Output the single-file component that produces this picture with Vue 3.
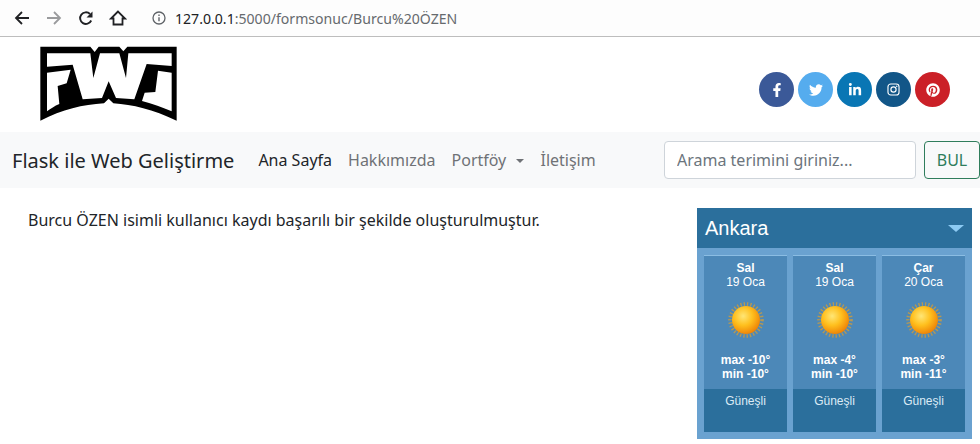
<template>
  <div class="page">
    <div class="browser-bar">
      <svg class="b-icon" width="16" height="16" viewBox="0 0 16 16"><path d="M15 8H2M8 2 2 8l6 6" fill="none" stroke="#202124" stroke-width="1.8"/></svg>
      <svg class="b-icon" width="16" height="16" viewBox="0 0 16 16"><path d="M1 8h13M8 2l6 6-6 6" fill="none" stroke="#9a9b9d" stroke-width="1.8"/></svg>
      <svg class="b-icon" width="16" height="16" viewBox="0 0 16 16"><path d="M13.2 10.5A5.8 5.8 0 1 1 12 4" fill="none" stroke="#202124" stroke-width="1.9"/><path d="M14.5 1.5v6h-6z" fill="#202124"/></svg>
      <svg class="b-icon home" width="18" height="18" viewBox="0 0 18 18"><path d="M9 2.5 2 9.5h2.5v6h9v-6H16z" fill="none" stroke="#202124" stroke-width="1.8" stroke-linejoin="miter"/></svg>
      <svg class="info" width="14" height="14" viewBox="0 0 14 14"><circle cx="7" cy="7" r="6" fill="none" stroke="#5f6368" stroke-width="1.3"/><path d="M7 6.2v4M7 3.6v1.4" stroke="#5f6368" stroke-width="1.4"/></svg>
      <div class="url"><span class="host">127.0.0.1</span>:5000/formsonuc/Burcu%20ÖZEN</div>
    </div>

    <header class="site-header">
      <svg class="logo" width="146" height="84" viewBox="0 0 438 252">
        <path d="M13 14H163L176 30 188 14H250L262 28 274 14H422V236C350 202 290 188 232 184L218 170 204 184C140 188 80 202 13 236Z" fill="#000"/>
        <g fill="#fff">
          <path d="M33 34H163L172 108 192 34H250L270 108 277 34H407V72L332 66 295 172 240 168 218 118 198 168 140 172 110 68 33 74Z"/>
          <path d="M33 92 104 83 92 124 65 132 70 186C55 192 45 200 33 208Z"/>
          <path d="M407 92 366 86 358 150 326 152 318 177C350 186 380 196 407 208Z"/>
        </g>
      </svg>
      <div class="socials">
        <a v-for="s in socials" :key="s.name" class="social" :class="s.name">
          <svg width="14" height="14" :viewBox="s.box"><path :d="s.d" fill="#fff"/></svg>
        </a>
        <a class="social instagram">
          <svg width="13" height="13" viewBox="0 0 16 16"><rect x="1.2" y="1.2" width="13.6" height="13.6" rx="3.5" fill="none" stroke="#fff" stroke-width="1.4"/><circle cx="8" cy="8" r="3.2" fill="none" stroke="#fff" stroke-width="1.4"/><circle cx="12" cy="4" r=".9" fill="#fff"/></svg>
        </a>
        <a class="social pinterest">
          <svg width="14" height="14" viewBox="0 0 496 512"><path :d="pinterest" fill="#fff"/></svg>
        </a>
      </div>
    </header>

    <nav class="navbar">
      <a class="brand">Flask ile Web Geliştirme</a>
      <a class="nav-link active">Ana Sayfa</a>
      <a class="nav-link">Hakkımızda</a>
      <a class="nav-link">Portföy <span class="caret"></span></a>
      <a class="nav-link">İletişim</a>
      <form class="search" @submit.prevent>
        <input type="text" placeholder="Arama terimini giriniz..." />
        <button>BUL</button>
      </form>
    </nav>

    <main class="content">
      <p class="message">Burcu ÖZEN isimli kullanıcı kaydı başarılı bir şekilde oluşturulmuştur.</p>
      <aside class="weather">
        <div class="city"><span>Ankara</span><i class="arrow"></i></div>
        <div class="days">
          <div v-for="(d, i) in days" :key="i" class="day">
            <div class="day-top">
              <b>{{ d.name }}</b>
              <span>{{ d.date }}</span>
              <svg class="sun" width="40" height="40" viewBox="0 0 40 40">
                <defs>
                  <radialGradient :id="'sun' + i" cx="40%" cy="36%" r="66%">
                    <stop offset="0" stop-color="#ffe676"/>
                    <stop offset=".5" stop-color="#ffc01e"/>
                    <stop offset="1" stop-color="#ee8305"/>
                  </radialGradient>
                </defs>
                <circle cx="20" cy="20" r="16" fill="none" stroke="#cf9c3a" stroke-width="3.6" stroke-dasharray="1.3 2" opacity=".8"/>
                <circle cx="20" cy="20" r="14" :fill="'url(#sun' + i + ')'"/>
              </svg>
              <b class="temp">max {{ d.max }}°</b>
              <b class="temp">min {{ d.min }}°</b>
            </div>
            <div class="day-bottom">Güneşli</div>
          </div>
        </div>
      </aside>
    </main>
  </div>
</template>

<script setup>
const socials = [
  { name: 'facebook', box: '0 0 320 512', d: 'M279.14 288l14.22-92.66h-88.91v-60.13c0-25.35 12.42-50.06 52.24-50.06h40.42V6.26S260.43 0 225.36 0c-73.22 0-121.08 44.38-121.08 124.72v70.62H22.89V288h81.39v224h100.17V288z' },
  { name: 'twitter', box: '0 0 512 512', d: 'M459.37 151.716c.325 4.548.325 9.097.325 13.645 0 138.72-105.583 298.558-298.558 298.558-59.452 0-114.68-17.219-161.137-47.106 8.447.974 16.568 1.299 25.34 1.299 49.055 0 94.213-16.568 130.274-44.832-46.132-.975-84.792-31.188-98.112-72.772 6.498.974 12.995 1.624 19.818 1.624 9.421 0 18.843-1.3 27.614-3.573-48.081-9.747-84.143-51.98-84.143-102.985v-1.299c13.969 7.797 30.214 12.67 47.431 13.319-28.264-18.843-46.781-51.005-46.781-87.391 0-19.492 5.197-37.36 14.294-52.954 51.655 63.675 129.3 105.258 216.365 109.807-1.624-7.797-2.599-15.918-2.599-24.04 0-57.828 46.782-104.934 104.934-104.934 30.213 0 57.502 12.67 76.67 33.137 23.715-4.548 46.456-13.32 66.599-25.34-7.798 24.366-24.366 44.833-46.132 57.827 21.117-2.273 41.584-8.122 60.426-16.243-14.292 20.791-32.161 39.308-52.628 54.253z' },
  { name: 'linkedin', box: '0 0 448 512', d: 'M100.28 448H7.4V148.9h92.88zM53.79 108.1C24.09 108.1 0 83.5 0 53.8a53.79 53.79 0 0 1 107.58 0c0 29.7-24.1 54.3-53.79 54.3zM447.9 448h-92.68V302.4c0-34.7-.7-79.2-48.29-79.2-48.29 0-55.69 37.7-55.69 76.7V448h-92.78V148.9h89.08v40.8h1.3c12.4-23.5 42.69-48.3 87.88-48.3 94 0 111.28 61.9 111.28 142.3V448z' }
];

const pinterest = 'M496 256c0 137-111 248-248 248-25.6 0-50.2-3.9-73.4-11.1 10.1-16.5 25.2-43.5 30.8-65 3-11.6 15.4-59 15.4-59 8.1 15.4 31.7 28.5 56.8 28.5 74.8 0 128.7-68.8 128.7-154.3 0-81.9-66.9-143.2-152.9-143.2-107 0-163.9 71.8-163.9 150.1 0 36.4 19.4 81.7 50.3 96.1 4.7 2.2 7.2 1.2 8.3-3.3.8-3.4 5-20.3 6.9-28.1.6-2.5.3-4.7-1.7-7.1-10.1-12.5-18.3-35.3-18.3-56.6 0-54.7 41.4-107.6 112-107.6 60.9 0 103.6 41.5 103.6 100.9 0 67.1-33.9 113.6-78 113.6-24.3 0-42.6-20.1-36.7-44.8 7-29.5 20.5-61.3 20.5-82.6 0-19-10.2-34.9-31.4-34.9-24.9 0-44.9 25.7-44.9 60.2 0 22 7.4 36.8 7.4 36.8s-24.5 103.8-29 123.2c-5 21.4-3 51.6-.9 71.2C65.4 450.9 0 361.1 0 256 0 119 111 8 248 8s248 111 248 248z';

const days = [
  { name: 'Sal', date: '19 Oca', max: -10, min: -10 },
  { name: 'Sal', date: '19 Oca', max: -4, min: -10 },
  { name: 'Çar', date: '20 Oca', max: -3, min: -11 }
];
</script>

<style>
html, body { margin: 0; background: #fff; overflow: hidden; }
</style>

<style scoped>
.page {
  font-family: "Noto Sans", sans-serif;
  font-size: 16px;
  color: #212529;
}

/* browser chrome */
.browser-bar {
  height: 36px;
  display: flex;
  align-items: center;
  padding-left: 14px;
  background: #fdfdfd;
  border-bottom: 1px solid #bdbdbd;
}
.b-icon { margin-right: 16px; flex: none; }
.home { margin-right: 0; margin-left: -1px; }
.info { margin-left: 25px; flex: none; }
.url {
  margin-left: 9px;
  font-size: 14.1px;
  color: #666a6e;
}
.host { color: #202124; }

/* logo and social row */
.site-header {
  height: 95px;
  display: flex;
  align-items: flex-start;
  justify-content: space-between;
  padding: 5px 30px 0 36px;
  box-sizing: border-box;
}
.socials {
  display: flex;
  gap: 4px;
  margin-top: 30px;
}
.social {
  width: 35px;
  height: 35px;
  border-radius: 50%;
  display: flex;
  align-items: center;
  justify-content: center;
}
.facebook { background: #3b5998; }
.twitter { background: #55acee; }
.linkedin { background: #0976b4; }
.instagram { background: #125688; }
.pinterest { background: #cb2027; }

/* navbar */
.navbar {
  height: 56px;
  display: flex;
  align-items: center;
  padding-left: 12px;
  background: #f8f9fa;
}
.brand {
  font-size: 20px;
  color: #212529;
  margin-right: 16px;
}
.nav-link {
  padding: 8px;
  color: #6f7276;
}
.nav-link.active { color: #212529; }
.caret {
  display: inline-block;
  margin-left: 6px;
  vertical-align: 3px;
  border-top: 4.5px solid;
  border-left: 4.5px solid transparent;
  border-right: 4.5px solid transparent;
}
.search {
  margin-left: auto;
  display: flex;
  gap: 8px;
}
.search input {
  width: 252px;
  height: 38px;
  box-sizing: border-box;
  padding: 6px 12px;
  font: inherit;
  border: 1px solid #ced4da;
  border-radius: 4px;
  background: #fff;
}
.search input::placeholder { color: #6c757d; opacity: 1; }
.search button {
  width: 56px;
  height: 38px;
  font: inherit;
  color: #2f7d5c;
  background: transparent;
  border: 1px solid #2f7d5c;
  border-radius: 4px;
}

/* content */
.content {
  display: flex;
  justify-content: space-between;
  align-items: flex-start;
  padding: 20px 8px 0 28px;
}
.message { margin: 0; line-height: 24px; }

/* weather widget */
.weather {
  width: 275px;
  height: 231px;
  display: flex;
  flex-direction: column;
  background: #6aa2d0;
  font-family: "Liberation Sans", Arial, sans-serif;
  color: #fff;
}
.city {
  height: 40px;
  flex: none;
  display: flex;
  align-items: center;
  justify-content: space-between;
  padding: 0 8px;
  font-size: 20px;
  background: #2b6f9c;
}
.arrow {
  border-top: 7px solid #8ccaf3;
  border-left: 8px solid transparent;
  border-right: 8px solid transparent;
}
.days {
  display: flex;
  gap: 6px;
  padding: 7px;
  flex: 1;
}
.day {
  flex: 1;
  display: flex;
  flex-direction: column;
  background: #4c88b8;
  border-top: 1px solid #8bbde3;
}
.day-top {
  height: 133px;
  display: flex;
  flex-direction: column;
  align-items: center;
  font-size: 12px;
  line-height: 14px;
  padding-top: 5px;
  box-sizing: border-box;
}
.sun { margin: 11px 0 13px; }
.day-bottom {
  flex: 1;
  background: #2b6f9c;
  text-align: center;
  font-size: 12px;
  line-height: 14px;
  padding-top: 5px;
  color: #dcebf6;
}
</style>
